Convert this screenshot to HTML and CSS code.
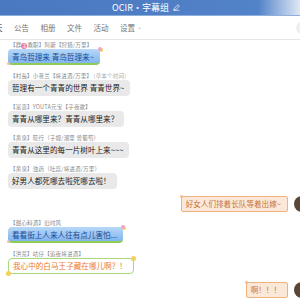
FILE: index.html
```html
<!DOCTYPE html>
<html lang="zh">
  <head>
    <meta charset="UTF-8" />
    <title>OCIR·字幕组</title>
    <link rel="stylesheet" href="styles.css">
  </head>
  <body>
    <div class="header">
      <span class="title">OCIR·字幕组</span>
      <svg class="edit" width="7" height="7" viewBox="0 0 10 10">
        <path d="M1 9 L2 6 L7 1 L9 3 L4 8 Z M1 9 H9" fill="none" stroke="#fff" stroke-width="1"/>
      </svg>
    </div>
    <div class="tabs">
      <span class="tab active">聊天</span>
      <span class="tab">公告</span>
      <span class="tab">相册</span>
      <span class="tab">文件</span>
      <span class="tab">活动</span>
      <span class="tab">设置 <span class="caret">⌄</span></span>
      <span class="search-btn"></span>
    </div>

    <div class="chat">
      <div class="msg">
        <div class="name">【群<span class="badge">主</span>教职】阿斯【狩猎/万里】</div>
        <div class="bubble blue">青鸟哲理来 青鸟哲理来~<i class="deco star"></i><i class="deco flower"></i></div>
      </div>
      <div class="msg">
        <div class="name">【村長】小苍兰【将进酒/万里】 <span class="faint">(草本个时间)</span></div>
        <div class="bubble gray">哲理有一个青青的世界 青青世界~</div>
      </div>
      <div class="msg">
        <div class="name">【富贵】YOUTA元宝【子夜歌】</div>
        <div class="bubble gray">青青从哪里来？青青从哪里来？</div>
      </div>
      <div class="msg">
        <div class="name">【黄泉】晓行（子规/潮里 曾葡萄）</div>
        <div class="bubble gray">青青从这里的每一片树叶上来~~~</div>
      </div>
      <div class="msg">
        <div class="name">【黄泉】浊药（吐蕊/将进酒/万里）</div>
        <div class="bubble gray">好男人都死哪去啦死哪去啦！</div>
      </div>
      <div class="msg mine first-mine">
        <div class="bubble orange">好女人们排着长队等着出嫁~<i class="deco dot"></i></div>
        <span class="avatar"></span>
      </div>
      <div class="msg">
        <div class="name">【甜心料酒】旧时风</div>
        <div class="bubble blue">看看街上人来人往有点儿害怕...<i class="deco star"></i><i class="deco flower"></i></div>
      </div>
      <div class="msg">
        <div class="name">【洪荒】咕仔【追夜将进酒】</div>
        <div class="bubble green">我心中的白马王子藏在哪儿啊？！<i class="deco sun tr"></i><i class="deco sun bl"></i></div>
      </div>
      <div class="msg mine">
        <div class="bubble orange">啊！！！<i class="deco dot"></i></div>
        <span class="avatar"></span>
      </div>
    </div>
  </body>
</html>
```

FILE: styles.css
```css
body {
  margin: 0;
  width: 300px;
  height: 300px;
  overflow: hidden;
  background-color: #fff;
  font-family: "Noto Sans CJK SC", "Noto Sans", sans-serif;
  color: #333;
}
.header {
  height: 16px;
  display: flex;
  align-items: center;
  justify-content: center;
  gap: 4px;
  padding-right: 8px;
  background: linear-gradient(90deg, #4a78c1 0%, #5282c8 86%, #dfe8f5 100%);
  border-bottom: 1px solid #8fb0dc;
  box-sizing: border-box;
}
.title {
  color: #fff;
  font-size: 9px;
  line-height: 16px;
}
.tabs {
  position: relative;
  height: 24px;
  display: flex;
  align-items: center;
  gap: 11.5px;
  margin-left: -12.5px;
  border-bottom: 1px solid #e6e6e6;
  box-sizing: border-box;
}
.tab {
  font-size: 7.5px;
  color: #777;
  white-space: nowrap;
}
.tab.active {
  color: #222;
}
.caret {
  font-size: 6px;
  color: #aaa;
  position: relative;
  top: -2px;
}
.search-btn {
  position: absolute;
  right: -8px;
  top: 6px;
  width: 12px;
  height: 12px;
  border-radius: 50%;
  background-color: #eee;
}
.chat {
  display: flex;
  flex-direction: column;
  gap: 8px;
  padding: 2px 0 0 8px;
}
.msg {
  display: flex;
  flex-direction: column;
  align-items: flex-start;
}
.msg.mine {
  flex-direction: row;
  justify-content: flex-end;
  align-items: center;
  gap: 6px;
  margin-right: -10px;
}
.first-mine {
  margin-top: -1px;
}
.name {
  font-size: 5.5px;
  letter-spacing: 0.2px;
  line-height: 7px;
  height: 7px;
  color: #888;
  padding-left: 2px;
  white-space: nowrap;
}
.faint {
  color: #aaa;
}
.badge {
  display: inline-block;
  width: 6px;
  height: 6px;
  border-radius: 50%;
  background-color: #f07aa0;
  color: #fff;
  font-size: 4px;
  letter-spacing: 0;
  line-height: 6px;
  text-align: center;
  vertical-align: middle;
}
.bubble {
  position: relative;
  height: 16px;
  line-height: 16px;
  padding: 0 6px 0 4px;
  font-size: 7.6px;
  border-radius: 4px;
  white-space: nowrap;
  box-sizing: border-box;
}
.bubble.gray {
  background-color: #e9e9e9;
  color: #222;
}
.bubble.blue {
  background: linear-gradient(180deg, #b8d8f7 0%, #82b5ee 100%);
  border-bottom: 2px solid #8fcc55;
  color: #1d4b92;
  line-height: 15px;
}
.bubble.green {
  background-color: #fff;
  border: 1px solid #a8d878;
  color: #ec7a2a;
  line-height: 14px;
}
.bubble.orange {
  background-color: #fbe8d8;
  border: 1px solid #efb27c;
  color: #c8763a;
  line-height: 14px;
  border-radius: 2px;
}
.avatar {
  width: 16px;
  height: 16px;
  border-radius: 50%;
  background-color: #5a4636;
}
.deco {
  position: absolute;
  width: 4px;
  height: 4px;
  border-radius: 50%;
}
.deco.star {
  right: -2px;
  top: -2px;
  background-color: #f3a2c8;
  box-shadow: 1px 1px 0 #f5d84a;
}
.deco.flower {
  left: -1px;
  bottom: -2px;
  width: 3px;
  height: 3px;
  background-color: #f7b2c2;
}
.deco.sun {
  width: 5px;
  height: 5px;
  background-color: #f3d25c;
}
.deco.tr {
  right: -3px;
  top: -3px;
}
.deco.bl {
  left: -3px;
  bottom: -3px;
}
.deco.dot {
  left: -2px;
  top: -2px;
  width: 3px;
  height: 3px;
  background-color: #f2b98a;
}
```
